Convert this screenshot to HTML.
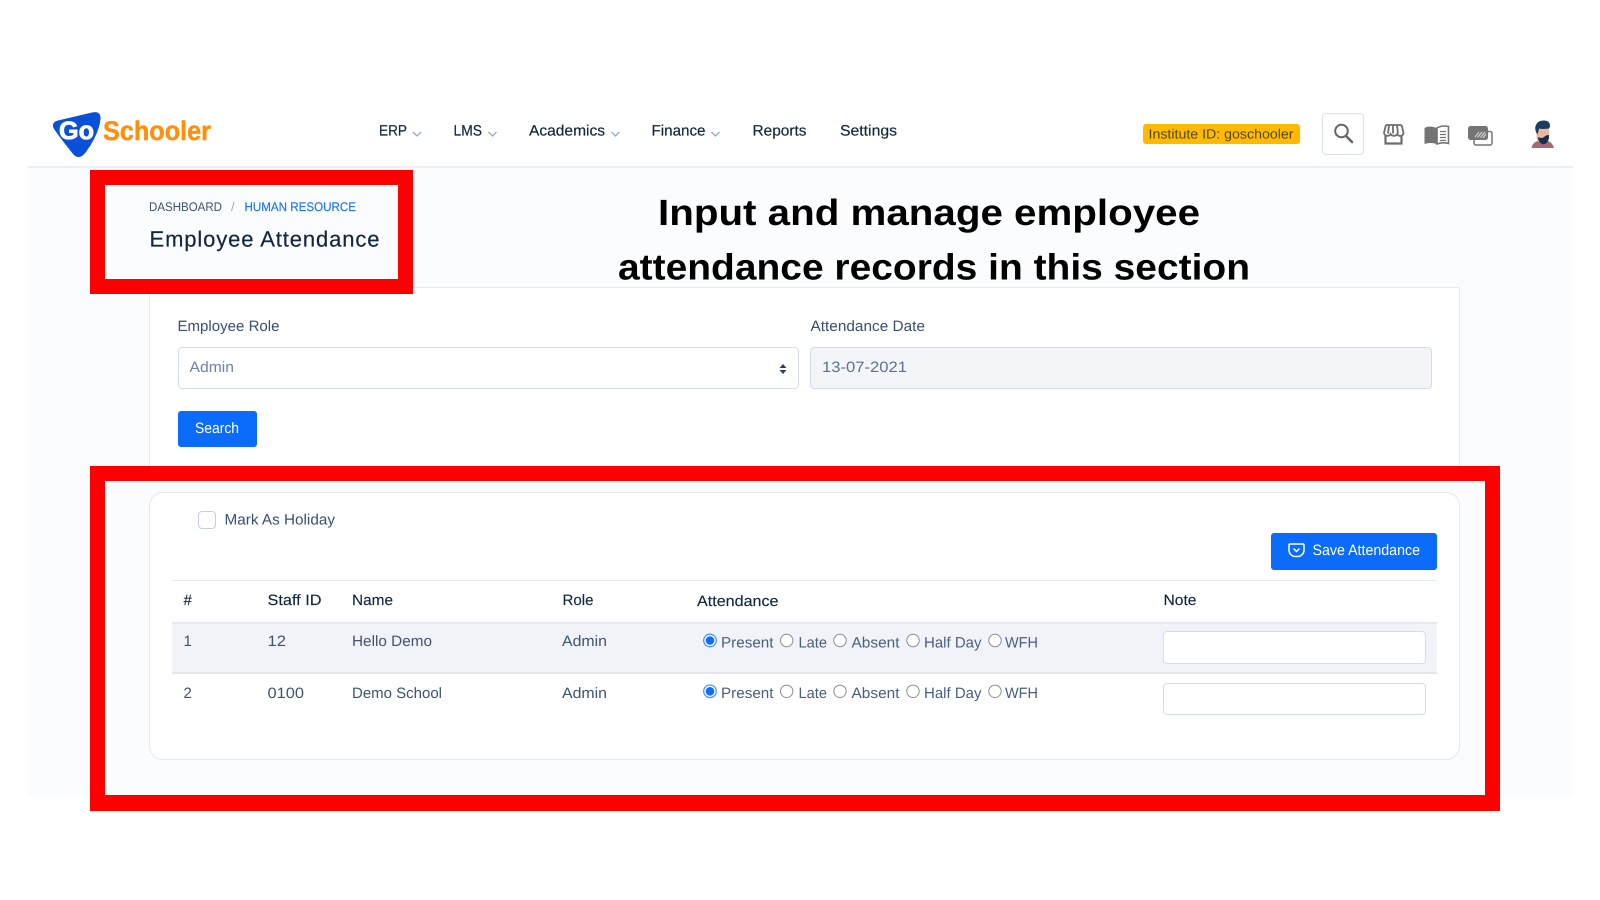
<!DOCTYPE html>
<html lang="en">
<head>
<meta charset="utf-8">
<title>Employee Attendance</title>
<style>
html,body{margin:0;padding:0;width:1600px;height:900px;overflow:hidden;background:#fff}
.b{position:absolute;box-sizing:border-box}
svg{position:absolute;left:0;top:0}
text{font-family:"Liberation Sans",sans-serif;text-rendering:geometricPrecision}
.nav{font-size:15px;fill:#12263f;stroke:#12263f;stroke-width:.2}
.lab{font-size:15px;fill:#3b506c}
.th{font-size:15px;fill:#12263f;stroke:#12263f;stroke-width:.15}
.td{font-size:15px;fill:#3f5470}
.op{font-size:15px;fill:#4a5f7c}
.chev{fill:none;stroke:#95aac9;stroke-width:1.3}
.r{fill:#fff;stroke:#8a8f96;stroke-width:1}
.rc{fill:#fff;stroke:#4d94fb;stroke-width:1.3}
.rd{fill:#0d6efd}
</style>
</head>
<body>
<div class="b" style="left:28px;top:167px;width:1545px;height:629px;background:#fbfcfe"></div>
<div class="b" style="left:28px;top:166px;width:1545px;height:2px;background:#eceef2"></div>

<div class="b" style="left:149px;top:287px;width:1311px;height:190px;background:#fff;border:1px solid #e6ebf3"></div>
<div class="b" style="left:177.500px;top:347px;width:621.500px;height:42px;background:#fff;border:1px solid #d2ddec;border-radius:4px"></div>
<div class="b" style="left:810px;top:347px;width:622px;height:42px;background:#f3f5f9;border:1px solid #d2ddec;border-radius:4px"></div>
<div class="b" style="left:177.500px;top:411px;width:79px;height:36px;background:#0b6cfb;border-radius:3px"></div>

<div class="b" style="left:149px;top:492px;width:1311px;height:268px;background:#fff;border:1px solid #e4e7ee;border-radius:14px"></div>
<div class="b" style="left:198px;top:511px;width:18px;height:18px;background:#fff;border:1.5px solid #c5d0de;border-radius:4px"></div>
<div class="b" style="left:1271px;top:532.500px;width:166px;height:37px;background:#0b6cfb;border-radius:3px"></div>
<div class="b" style="left:172px;top:580px;width:1265px;height:1px;background:#e3ebf6"></div>
<div class="b" style="left:172px;top:622px;width:1265px;height:52px;background:#f1f3f8;border-top:2px solid #e6e9f0;border-bottom:2px solid #e3e6ee"></div>
<div class="b" style="left:1163px;top:631px;width:263px;height:33px;background:#fff;border:1px solid #d2ddec;border-radius:4px"></div>
<div class="b" style="left:1163px;top:683px;width:263px;height:32px;background:#fff;border:1px solid #d2ddec;border-radius:4px"></div>

<div class="b" style="left:90px;top:170px;width:322.500px;height:124px;border:15px solid #ff0000;background:#fbfcfe"></div>
<div class="b" style="left:90px;top:466px;width:1410px;height:344.500px;border:15px solid #ff0000;border-bottom-width:16px"></div>

<div class="b" style="left:1143px;top:124px;width:157px;height:20px;background:#ffba00;border-radius:3px"></div>
<div class="b" style="left:1322px;top:113px;width:42px;height:42px;background:#fff;border:1px solid #d8e2ef;border-radius:4px"></div>

<svg width="1600" height="900" viewBox="0 0 1600 900" xmlns="http://www.w3.org/2000/svg">
<!-- logo -->
<path d="M58 120.500 L92 112.500 Q101 110.500 100.500 119 Q99 134 86 152 Q79 161 73 154 Q61 139 54 129 Q50.500 122.500 58 120.500Z" fill="#0b50d8"/>
<text x="59" y="139" font-size="25" font-weight="700" fill="#fff" stroke="#fff" stroke-width=".8" textLength="35" lengthAdjust="spacingAndGlyphs">Go</text>
<text x="103" y="140" font-size="27" font-weight="700" fill="#ff8f0a" stroke="#ff8f0a" stroke-width=".4" textLength="108" lengthAdjust="spacingAndGlyphs">Schooler</text>

<!-- nav -->
<text class="nav" x="379" y="135.500" textLength="28" lengthAdjust="spacingAndGlyphs">ERP</text>
<path class="chev" d="M413 132l4 4 4-4"/>
<text class="nav" x="453.500" y="135.500" textLength="28.500" lengthAdjust="spacingAndGlyphs">LMS</text>
<path class="chev" d="M488.500 132l4 4 4-4"/>
<text class="nav" x="529" y="135.500" textLength="76" lengthAdjust="spacingAndGlyphs">Academics</text>
<path class="chev" d="M611.500 132l4 4 4-4"/>
<text class="nav" x="651.500" y="135.500" textLength="54" lengthAdjust="spacingAndGlyphs">Finance</text>
<path class="chev" d="M711.500 132l4 4 4-4"/>
<text class="nav" x="752.500" y="135.500" textLength="54" lengthAdjust="spacingAndGlyphs">Reports</text>
<text class="nav" x="840" y="135.500" textLength="57" lengthAdjust="spacingAndGlyphs">Settings</text>

<!-- header right -->
<text x="1148.500" y="138.500" font-size="13.500" fill="#4d4a2c" textLength="145" lengthAdjust="spacingAndGlyphs">Institute ID: goschooler</text>
<circle cx="1341.500" cy="131" r="6.300" fill="none" stroke="#666" stroke-width="2"/>
<path d="M1346 136l6 6" stroke="#666" stroke-width="2.600" stroke-linecap="round"/>

<!-- store -->
<path d="M1386.500 125h13.500a2 2 0 0 1 2 1.500l1.500 6.500a3.300 3.300 0 0 1-6.300 1 3.300 3.300 0 0 1-3.300 1.800 3.300 3.300 0 0 1-3.300-1.800 3.300 3.300 0 0 1-3.300 1.800 3.300 3.300 0 0 1-3.300-2.800l1.500-6.500a2 2 0 0 1 2-1.500z" fill="#fff" stroke="#6e6e6e" stroke-width="1.800"/>
<path d="M1389 125.500l-1 8M1393 125.500v8M1397 125.500l1 8" stroke="#6e6e6e" stroke-width="1.800"/>
<path d="M1385.500 136v7.500h16v-7.500" fill="none" stroke="#6e6e6e" stroke-width="2.200"/>
<!-- book -->
<path d="M1424.500 128q5-3 12 0v16q-6-2-12 0z" fill="#757575"/>
<path d="M1437 128q5-3 11.500-1.500v17q-6-1.500-11.500.5z" fill="#fff" stroke="#757575" stroke-width="1.600"/>
<path d="M1440 131.500h6M1440 134.500h6M1440 137.500h6M1440 140.500h6" stroke="#757575" stroke-width="1.200"/>
<!-- cards -->
<rect x="1468" y="126" width="20" height="14" rx="2.500" fill="#757575"/>
<path d="M1475 137l4-5M1477.500 137.500l4.500-5.500M1480.500 137.500l4.500-5.500M1483 138l3-4" stroke="#d8d8d8" stroke-width="1.100"/>
<path d="M1488 131.500h2a2 2 0 0 1 2 2v9.500a2 2 0 0 1-2 2h-14a2 2 0 0 1-2-2v-3" fill="#fff" fill-opacity="0" stroke="#757575" stroke-width="1.500"/>
<path d="M1476 140.500h13v1.500h-13z" fill="#fff"/>
<!-- avatar -->
<path d="M1531.500 148q1-6 8-7.500h7q6 1.500 7.500 7.500z" fill="#a8696e"/>
<path d="M1536.500 128h12.500v10q-1 5-6 6-5.500-1-6.500-6z" fill="#ecb79d"/>
<path d="M1535.500 126q2-6 9-5.500 6 .5 5.500 6l-1 2q-7 1-10 0-.5 3-1.500 6-3-4-2-8.500z" fill="#1b3c63"/>
<path d="M1538 137q4 2 6 0t5-2q.5 5-2.500 8-3 2.500-5.500.5-3-2-3-6.500z" fill="#16304f"/>

<!-- breadcrumb -->
<text x="149" y="211" font-size="12.500" fill="#3f5470" textLength="73" lengthAdjust="spacingAndGlyphs">DASHBOARD</text>
<text x="231" y="211" font-size="12.500" fill="#95aac9">/</text>
<text x="244.500" y="211" font-size="12.500" fill="#1a73f5" stroke="#1a73f5" stroke-width=".15" textLength="111.500" lengthAdjust="spacingAndGlyphs">HUMAN RESOURCE</text>
<text x="149.500" y="246.500" font-size="22" fill="#12263f" stroke="#12263f" stroke-width=".2" textLength="230" lengthAdjust="spacing">Employee Attendance</text>

<!-- headline -->
<text x="658" y="225" font-size="36.500" font-weight="700" fill="#000" textLength="542" lengthAdjust="spacingAndGlyphs">Input and manage employee</text>
<text x="618" y="279.500" font-size="36.500" font-weight="700" fill="#000" textLength="632" lengthAdjust="spacingAndGlyphs">attendance records in this section</text>

<!-- form -->
<text class="lab" x="177.500" y="331" textLength="102" lengthAdjust="spacingAndGlyphs">Employee Role</text>
<text class="lab" x="810.500" y="331" textLength="114.500" lengthAdjust="spacingAndGlyphs">Attendance Date</text>
<text x="189.500" y="372" font-size="15" fill="#6e84a3" textLength="44.500" lengthAdjust="spacingAndGlyphs">Admin</text>
<path d="M779.500 368l3.500-4 3.500 4zM779.500 370l3.500 4 3.500-4z" fill="#2b3f5c"/>
<text x="822" y="372" font-size="15" fill="#5c7190" textLength="85" lengthAdjust="spacingAndGlyphs">13-07-2021</text>
<text x="195" y="433" font-size="15" fill="#fff" textLength="44" lengthAdjust="spacingAndGlyphs">Search</text>

<text class="lab" x="224.500" y="524.500" textLength="110.500" lengthAdjust="spacingAndGlyphs">Mark As Holiday</text>

<!-- save -->
<path d="M1290 544h13a1 1 0 0 1 1 1v5a6.500 6.500 0 0 1-6.500 6.500h-2a6.500 6.500 0 0 1-6.500-6.500v-5a1 1 0 0 1 1-1z" fill="none" stroke="#fff" stroke-width="1.500"/>
<path d="M1293.500 548.500l3 3 3-3" fill="none" stroke="#fff" stroke-width="1.500"/>
<text x="1312.500" y="555" font-size="15" fill="#fff" textLength="107.500" lengthAdjust="spacingAndGlyphs">Save Attendance</text>

<!-- table head -->
<text class="th" x="183.500" y="605">#</text>
<text class="th" x="267.500" y="605" textLength="54" lengthAdjust="spacingAndGlyphs">Staff ID</text>
<text class="th" x="352" y="605" textLength="41" lengthAdjust="spacingAndGlyphs">Name</text>
<text class="th" x="562.500" y="605" textLength="31" lengthAdjust="spacingAndGlyphs">Role</text>
<text class="th" x="697" y="606" textLength="81.500" lengthAdjust="spacingAndGlyphs">Attendance</text>
<text class="th" x="1163.500" y="605" textLength="33" lengthAdjust="spacingAndGlyphs">Note</text>

<!-- row 1 -->
<text class="td" x="183.500" y="646">1</text>
<text class="td" x="267.500" y="646" textLength="18.500" lengthAdjust="spacingAndGlyphs">12</text>
<text class="td" x="352" y="646" textLength="80" lengthAdjust="spacingAndGlyphs">Hello Demo</text>
<text class="td" x="562" y="646" textLength="45" lengthAdjust="spacingAndGlyphs">Admin</text>
<circle class="rc" cx="710" cy="640.500" r="6.300"/><circle class="rd" cx="710" cy="640.500" r="4.300"/>
<text class="op" x="721" y="647.500" textLength="52.500" lengthAdjust="spacingAndGlyphs">Present</text>
<circle class="r" cx="786.700" cy="640.500" r="6.200"/>
<text class="op" x="798.500" y="647.500" textLength="28.500" lengthAdjust="spacingAndGlyphs">Late</text>
<circle class="r" cx="840" cy="640.500" r="6.200"/>
<text class="op" x="851.500" y="647.500" textLength="48" lengthAdjust="spacingAndGlyphs">Absent</text>
<circle class="r" cx="913" cy="640.500" r="6.200"/>
<text class="op" x="924" y="647.500" textLength="57.500" lengthAdjust="spacingAndGlyphs">Half Day</text>
<circle class="r" cx="995" cy="640.500" r="6.200"/>
<text class="op" x="1005" y="647.500" textLength="33" lengthAdjust="spacingAndGlyphs">WFH</text>

<!-- row 2 -->
<text class="td" x="183.500" y="698">2</text>
<text class="td" x="267.500" y="698" textLength="36.500" lengthAdjust="spacingAndGlyphs">0100</text>
<text class="td" x="352" y="698" textLength="90" lengthAdjust="spacingAndGlyphs">Demo School</text>
<text class="td" x="562" y="698" textLength="45" lengthAdjust="spacingAndGlyphs">Admin</text>
<circle class="rc" cx="710" cy="691.300" r="6.300"/><circle class="rd" cx="710" cy="691.300" r="4.300"/>
<text class="op" x="721" y="698" textLength="52.500" lengthAdjust="spacingAndGlyphs">Present</text>
<circle class="r" cx="786.700" cy="691.300" r="6.200"/>
<text class="op" x="798.500" y="698" textLength="28.500" lengthAdjust="spacingAndGlyphs">Late</text>
<circle class="r" cx="840" cy="691.300" r="6.200"/>
<text class="op" x="851.500" y="698" textLength="48" lengthAdjust="spacingAndGlyphs">Absent</text>
<circle class="r" cx="913" cy="691.300" r="6.200"/>
<text class="op" x="924" y="698" textLength="57.500" lengthAdjust="spacingAndGlyphs">Half Day</text>
<circle class="r" cx="995" cy="691.300" r="6.200"/>
<text class="op" x="1005" y="698" textLength="33" lengthAdjust="spacingAndGlyphs">WFH</text>
</svg>
</body>
</html>
